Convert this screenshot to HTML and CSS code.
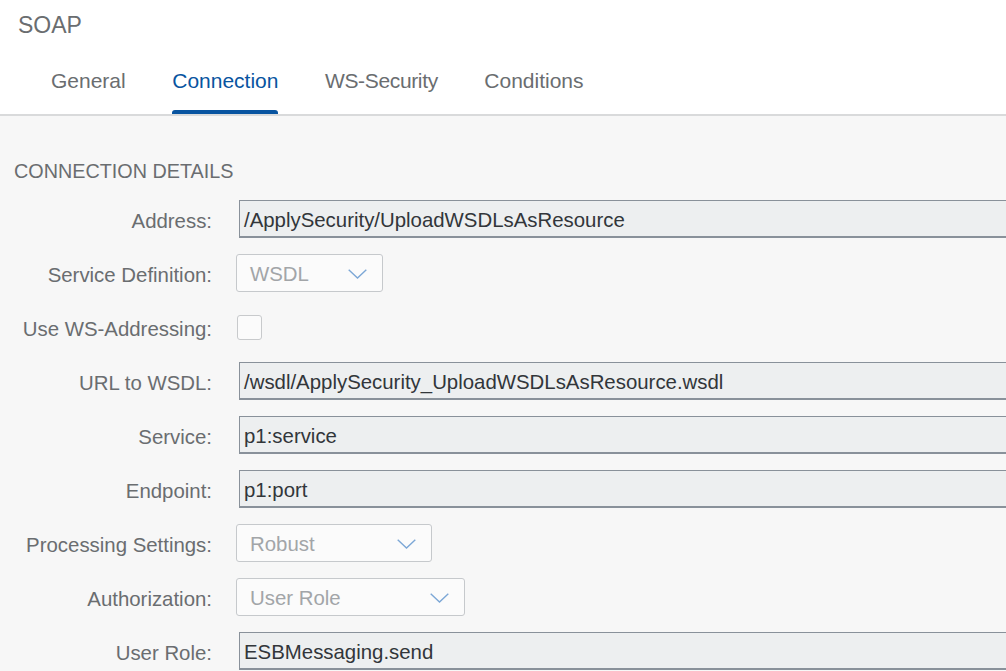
FILE: index.html
```html
<!DOCTYPE html>
<html lang="en">
<head>
<meta charset="utf-8">
<title>SOAP</title>
<link rel="stylesheet" href="styles.css">
</head>
<body>
<header class="header">
  <div class="title">SOAP</div>
  <nav class="tabs">
    <div class="tab">General</div>
    <div class="tab active">Connection</div>
    <div class="tab tight">WS-Security</div>
    <div class="tab">Conditions</div>
  </nav>
</header>
<main class="content">
  <h2 class="section-title">CONNECTION DETAILS</h2>
  <div class="form">
    <label class="label">Address:</label>
    <div class="field"><div class="input">/ApplySecurity/UploadWSDLsAsResource</div></div>

    <label class="label">Service Definition:</label>
    <div class="field"><div class="select w-wsdl"><span>WSDL</span><svg class="chev" viewBox="0 0 19 10" width="19" height="10"><path d="M0.7 0.7 L9.5 9 L18.3 0.7" fill="none" stroke="#7ca7d6" stroke-width="1.4"/></svg></div></div>

    <label class="label">Use WS-Addressing:</label>
    <div class="field"><div class="checkbox"></div></div>

    <label class="label">URL to WSDL:</label>
    <div class="field"><div class="input">/wsdl/ApplySecurity_UploadWSDLsAsResource.wsdl</div></div>

    <label class="label">Service:</label>
    <div class="field"><div class="input">p1:service</div></div>

    <label class="label">Endpoint:</label>
    <div class="field"><div class="input">p1:port</div></div>

    <label class="label">Processing Settings:</label>
    <div class="field"><div class="select w-robust"><span>Robust</span><svg class="chev" viewBox="0 0 19 10" width="19" height="10"><path d="M0.7 0.7 L9.5 9 L18.3 0.7" fill="none" stroke="#7ca7d6" stroke-width="1.4"/></svg></div></div>

    <label class="label">Authorization:</label>
    <div class="field"><div class="select w-role"><span>User Role</span><svg class="chev" viewBox="0 0 19 10" width="19" height="10"><path d="M0.7 0.7 L9.5 9 L18.3 0.7" fill="none" stroke="#7ca7d6" stroke-width="1.4"/></svg></div></div>

    <label class="label">User Role:</label>
    <div class="field"><div class="input">ESBMessaging.send</div></div>
  </div>
</main>
</body>
</html>
```

FILE: styles.css
```css
html, body {
  margin: 0;
  padding: 0;
  overflow: hidden;
}
body {
  font-family: "Liberation Sans", Arial, sans-serif;
  background: #f7f7f7;
  color: #32363a;
  width: 1006px;
  height: 671px;
}
.header {
  background: #ffffff;
  border-bottom: 2px solid #d9dadb;
}
.title {
  padding: 12px 0 0 18px;
  font-size: 23px;
  line-height: 27px;
  color: #6a6d70;
}
.tabs {
  display: flex;
  gap: 46.5px;
  padding: 30px 0 0 51px;
}
.tab {
  display: flex;
  flex-direction: column;
  font-size: 21px;
  line-height: 24px;
  color: #6a6d70;
}
.tab.tight {
  letter-spacing: -0.35px;
}
.tab::after {
  content: "";
  display: block;
  height: 4px;
  margin-top: 17px;
  border-radius: 3px 3px 0 0;
  background: transparent;
}
.tab.active {
  color: #0854a0;
}
.tab.active::after {
  background: #0854a0;
}
.content {
  padding: 43px 0 0 14px;
}
.section-title {
  margin: 0 0 17px 0;
  font-weight: normal;
  font-size: 19.8px;
  line-height: 24px;
  color: #6a6d70;
}
.form {
  display: grid;
  grid-template-columns: 198px 1fr;
  column-gap: 24px;
  row-gap: 16px;
  align-items: center;
}
.label {
  text-align: right;
  font-size: 20.4px;
  color: #6a6d70;
  line-height: 24px;
  padding-top: 3px;
}
.field {
  height: 38px;
  display: flex;
  align-items: center;
  min-width: 0;
}
.input {
  box-sizing: border-box;
  margin-left: 3px;
  width: 820px;
  flex: none;
  height: 38px;
  border-top: 1px solid #89919a;
  border-left: 1px solid #89919a;
  border-bottom: 2px solid #89919a;
  background: #edeff0;
  padding-left: 4px;
  font-size: 20.4px;
  line-height: 38px;
  color: #32363a;
  white-space: nowrap;
  overflow: visible;
}
.select {
  box-sizing: border-box;
  height: 38px;
  border: 1.5px solid #c6c9cc;
  border-radius: 3px;
  background: #fbfbfb;
  display: flex;
  align-items: center;
  justify-content: space-between;
  padding: 2px 15px 0 13px;
  font-size: 20.4px;
  color: #a2a5a8;
}
.chev {
  display: block;
  margin-top: -1px;
}
.w-wsdl { width: 147px; }
.w-robust { width: 196px; }
.w-role { width: 229px; }
.checkbox {
  box-sizing: border-box;
  margin-left: 1px;
  width: 25px;
  height: 25px;
  border: 1.5px solid #c8cacc;
  border-radius: 3px;
  background: #fbfbfb;
}
```
